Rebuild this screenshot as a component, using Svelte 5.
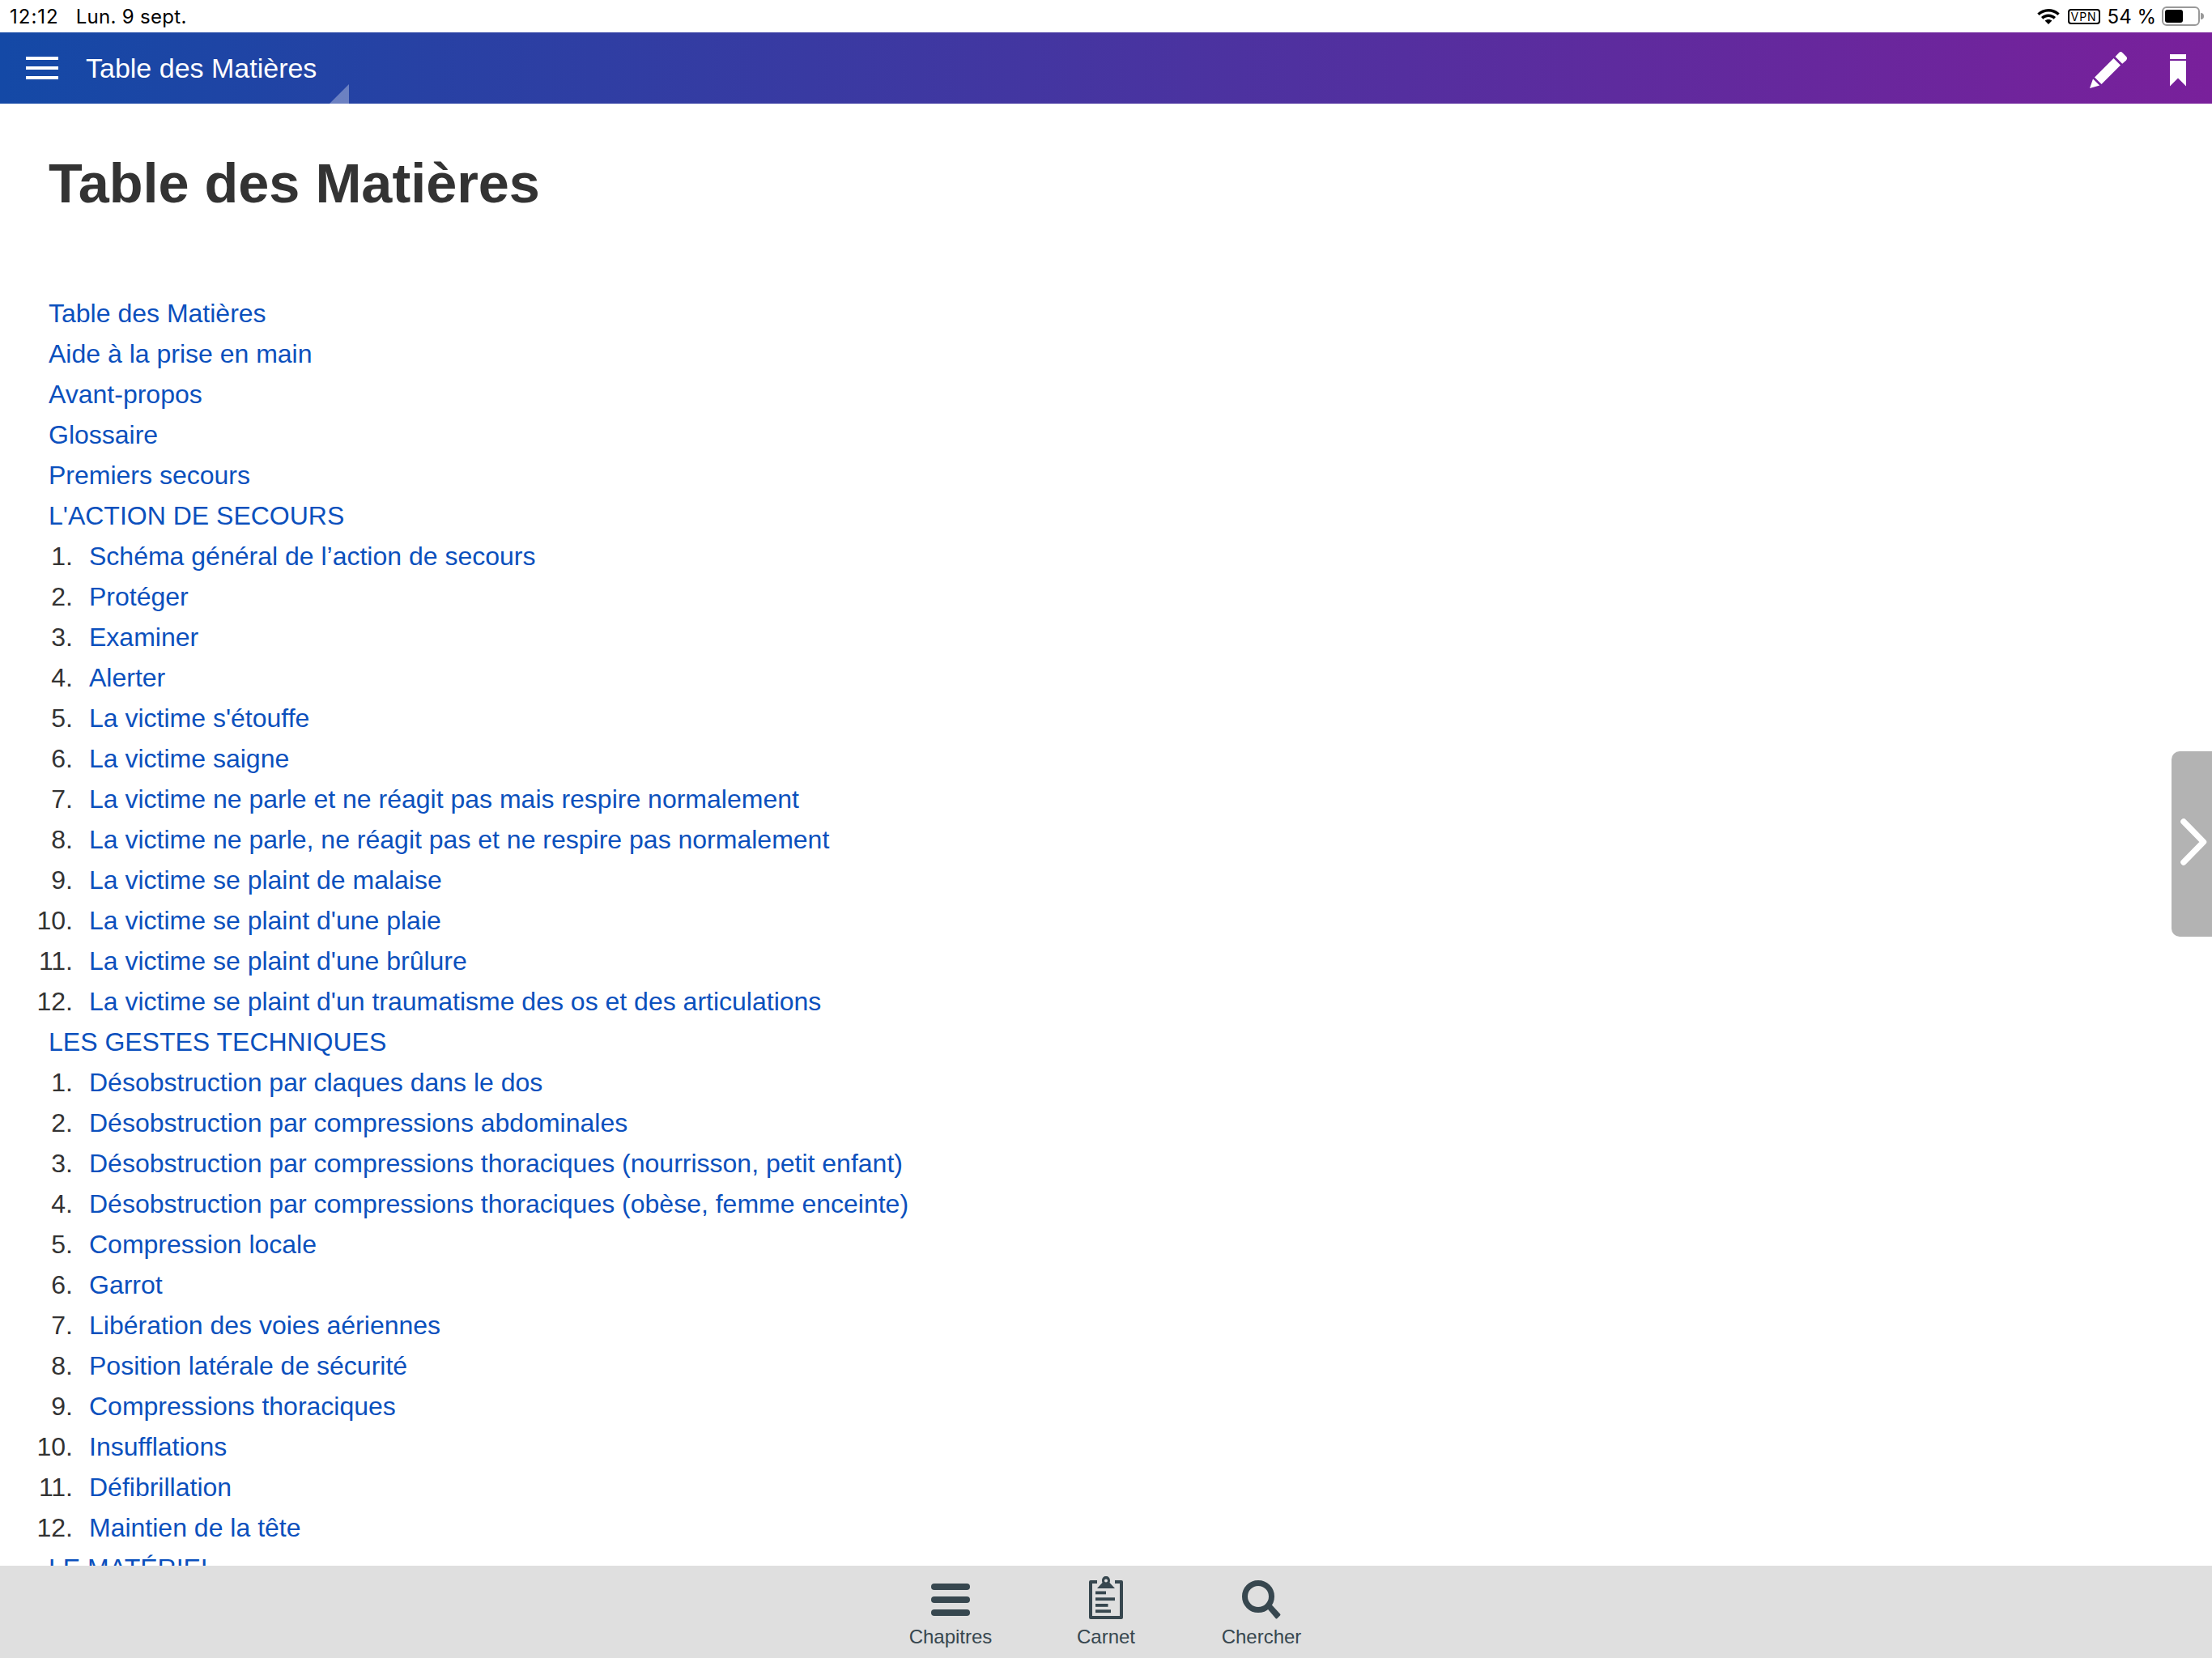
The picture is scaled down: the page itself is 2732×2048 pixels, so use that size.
<script>
  const intro = ['Table des Matières', 'Aide à la prise en main', 'Avant-propos', 'Glossaire', 'Premiers secours'];
  const sections = [
    {
      title: "L'ACTION DE SECOURS",
      items: [
        'Schéma général de l’action de secours', 'Protéger', 'Examiner', 'Alerter',
        "La victime s'étouffe", 'La victime saigne',
        'La victime ne parle et ne réagit pas mais respire normalement',
        'La victime ne parle, ne réagit pas et ne respire pas normalement',
        'La victime se plaint de malaise', "La victime se plaint d'une plaie",
        "La victime se plaint d'une brûlure",
        "La victime se plaint d'un traumatisme des os et des articulations"
      ]
    },
    {
      title: 'LES GESTES TECHNIQUES',
      items: [
        'Désobstruction par claques dans le dos', 'Désobstruction par compressions abdominales',
        'Désobstruction par compressions thoraciques (nourrisson, petit enfant)',
        'Désobstruction par compressions thoraciques (obèse, femme enceinte)',
        'Compression locale', 'Garrot', 'Libération des voies aériennes',
        'Position latérale de sécurité', 'Compressions thoraciques', 'Insufflations',
        'Défibrillation', 'Maintien de la tête'
      ]
    },
    { title: 'LE MATÉRIEL', items: [] }
  ];
</script>

<div class="screen">
  <div class="status">
    <span class="time">12:12</span>
    <span class="date">Lun. 9 sept.</span>
    <span class="spring"></span>
    <svg class="wifi" width="28" height="19" viewBox="0 0 28 19">
      <path d="M14 0C8.7 0 4 2.1 0.3 5.4L2.6 8C5.7 5.2 9.7 3.5 14 3.5S22.3 5.2 25.4 8L27.7 5.4C24 2.1 19.3 0 14 0Z" />
      <path d="M14 6.6C10.6 6.6 7.5 7.9 5 10.1L7.4 12.7C9.2 11.1 11.5 10.1 14 10.1S18.8 11.1 20.6 12.7L23 10.1C20.5 7.9 17.4 6.6 14 6.6Z" />
      <path d="M14 13C12.3 13 10.8 13.6 9.6 14.6L14 19L18.4 14.6C17.2 13.6 15.7 13 14 13Z" />
    </svg>
    <span class="vpn">VPN</span>
    <span class="pct">54 %</span>
    <span class="battery"><span class="level"></span></span>
    <span class="nub"></span>
  </div>

  <header class="bar">
    <svg class="burger" width="40" height="28" viewBox="0 0 40 28">
      <rect width="40" height="4" y="0" /><rect width="40" height="4" y="12" /><rect width="40" height="4" y="24" />
    </svg>
    <span class="bar-title">Table des Matières</span>
    <span class="corner"></span>
    <span class="spring"></span>
    <svg class="pencil" width="47" height="46" viewBox="0 0 47 46">
      <path d="M0 46L4 34.5L12.2 42.5Z" />
      <path d="M6 32.5L29.5 9L38 17.5L14.5 41Z" />
      <path d="M31.5 7L36 2.2Q38.2 0 40.5 2.2L45.2 7Q47 9.2 45 11.4L40.2 15.8Z" />
    </svg>
    <svg class="bookmark" width="20" height="40" viewBox="0 0 20 40">
      <rect width="20" height="6" />
      <path d="M0 8H20V39.5L10 29.5L0 39.5Z" />
    </svg>
  </header>

  <main class="page">
    <h1>Table des Matières</h1>
    <nav class="toc">
      {#each intro as label}
        <a href="#top">{label}</a>
      {/each}
      {#each sections as section}
        <a href="#top">{section.title}</a>
        {#if section.items.length}
          <ol>
            {#each section.items as item, i}
              <li><span class="num">{i + 1}.</span><a href="#top">{item}</a></li>
            {/each}
          </ol>
        {/if}
      {/each}
    </nav>
  </main>

  <button class="next" aria-label="Suivant">
    <svg width="34" height="58" viewBox="0 0 34 58">
      <path d="M4 4L28.5 29L4 54" />
    </svg>
  </button>

  <footer class="tabs">
    <div class="tab">
      <span class="ico">
        <svg class="lines" width="48" height="40" viewBox="0 0 48 40">
          <rect width="48" height="8" rx="4" y="0" /><rect width="48" height="8" rx="4" y="16" /><rect width="48" height="8" rx="4" y="32" />
        </svg>
      </span>
      <span class="lbl">Chapitres</span>
    </div>
    <div class="tab">
      <span class="ico">
        <svg width="42" height="53" viewBox="0 0 42 53">
          <path d="M2 5H10V9H4V49H38V9H32V5H40Q42 5 42 7V51Q42 53 40 53H2Q0 53 0 51V7Q0 5 2 5Z" />
          <path fill-rule="evenodd" d="M21 0C24 0 26 2 26 5.5C26 6.5 25.8 7.2 25.5 8L32 15H10L16.5 8C16.2 7.2 16 6.5 16 5.5C16 2 18 0 21 0ZM21 3.5A2 2 0 1 0 21 7.5A2 2 0 1 0 21 3.5Z" />
          <rect x="8" y="18.5" width="13" height="3.8" /><rect x="8" y="26.3" width="24" height="3.8" />
          <rect x="8" y="34" width="15.5" height="3.8" /><rect x="8" y="41.3" width="19" height="3.8" />
        </svg>
      </span>
      <span class="lbl">Carnet</span>
    </div>
    <div class="tab">
      <span class="ico">
        <svg width="48" height="48" viewBox="0 0 48 48">
          <circle cx="20" cy="20" r="16.5" fill="none" stroke-width="7" />
          <path d="M30 33.5L35 28.5L47 41.5Q48 42.5 47 43.5L43.5 47Q42.5 48 41.5 47Z" />
        </svg>
      </span>
      <span class="lbl">Chercher</span>
    </div>
  </footer>
</div>

<style>
  :global(body) { margin: 0; background: #fff; }
  .screen {
    position: relative;
    width: 2732px;
    height: 2048px;
    display: flex;
    flex-direction: column;
    overflow: hidden;
    font-family: "Liberation Sans", Arial, sans-serif;
    color: #333;
    background: #fff;
  }
  .spring { flex: 1; }

  .status {
    height: 40px;
    flex: none;
    display: flex;
    align-items: center;
    padding: 0 10px 0 12px;
    box-sizing: border-box;
    font-family: Inter, "Liberation Sans", sans-serif;
    font-size: 24px;
    color: #000;
  }
  .time { letter-spacing: 1px; }
  .date { margin-left: 21px; letter-spacing: 0.3px; }
  .wifi { fill: #000; }
  .vpn {
    width: 40px;
    height: 19px;
    margin-left: 10px;
    box-sizing: border-box;
    border: 2px solid #000;
    border-radius: 4px;
    font-size: 14px;
    line-height: 15px;
    text-align: center;
    letter-spacing: 1px;
  }
  .pct { margin-left: 9px; }
  .battery {
    width: 47px;
    height: 24px;
    margin-left: 7px;
    box-sizing: border-box;
    border: 2px solid #999;
    border-radius: 6px;
    padding: 2px;
    display: flex;
  }
  .level { width: 22px; background: #000; border-radius: 3px; }
  .nub {
    width: 4px;
    height: 8px;
    margin-left: 1px;
    background: #999;
    border-radius: 0 4px 4px 0;
  }

  .bar {
    height: 88px;
    flex: none;
    display: flex;
    align-items: center;
    padding: 0 32px;
    box-sizing: border-box;
    color: #fff;
    position: relative;
    background: linear-gradient(90deg, #1449a6 0%, #79209b 100%);
  }
  .burger { fill: #fff; }
  .bar-title { font-size: 34px; margin-left: 34px; }
  .corner {
    position: absolute;
    left: 407px;
    top: 64px;
    width: 24px;
    height: 24px;
    background: rgba(255, 255, 255, 0.33);
    clip-path: polygon(100% 0, 100% 100%, 0 100%);
  }
  .pencil { fill: #fff; margin-top: 4px; }
  .bookmark { fill: #fff; margin-left: 52px; margin-top: 6px; }

  .page {
    flex: 1;
    min-height: 0;
    overflow: hidden;
    padding: 58px 0 0 60px;
  }
  h1 {
    margin: 0 0 96px;
    font-size: 68.4px;
    line-height: 80px;
    font-weight: 700;
    color: #333;
  }
  .toc { font-size: 32px; line-height: 50px; }
  .toc a { color: #0b50bd; text-decoration: none; display: block; }
  ol { list-style: none; margin: 0; padding: 0; }
  li { display: flex; margin-left: -20px; }
  .num { width: 50px; text-align: right; margin-right: 20px; color: #333; flex: none; }

  .next {
    position: absolute;
    right: 0;
    top: 928px;
    width: 50px;
    height: 229px;
    padding: 0;
    border: 0;
    border-radius: 10px 0 0 10px;
    background: #b3b3b3;
  }
  .next svg { position: absolute; left: 11px; top: 83px; }
  .next path { fill: none; stroke: #fff; stroke-width: 7.5; stroke-linecap: round; stroke-linejoin: round; }

  .tabs {
    height: 114px;
    flex: none;
    display: flex;
    justify-content: center;
    background: #dfdfdf;
    color: #37474f;
  }
  .tab {
    width: 192px;
    display: flex;
    flex-direction: column;
    align-items: center;
  }
  .ico {
    height: 66px;
    display: flex;
    align-items: flex-end;
  }
  .ico svg { fill: #37474f; stroke: none; }
  .ico .lines { margin-bottom: 4px; }
  .ico circle { stroke: #37474f; }
  .lbl { font-size: 24px; line-height: 28px; margin-top: 8px; }
</style>
